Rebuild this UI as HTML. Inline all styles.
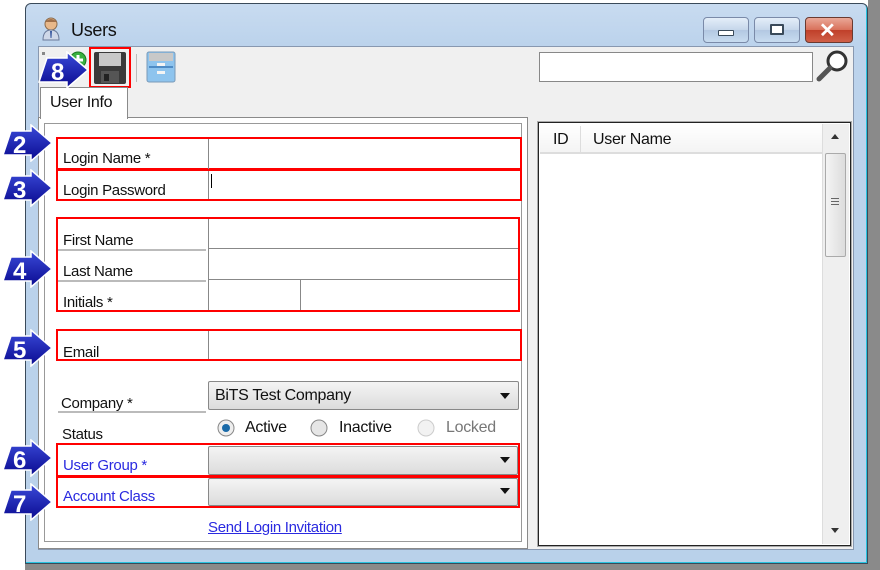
<!DOCTYPE html>
<html><head><meta charset="utf-8"><style>
*{margin:0;padding:0;box-sizing:border-box}
body{width:880px;height:570px;background:#fff;position:relative;overflow:hidden;font-family:"Liberation Sans",sans-serif;font-size:15px;color:#111}
.a{position:absolute}
.lbl{position:absolute;font-size:15px;letter-spacing:-0.3px}
.red{position:absolute;border:2px solid #f00}
.ul{position:absolute;height:2px;background:#bbb}
.cmb{position:absolute;border:1px solid #888;border-radius:2px;background:linear-gradient(#f4f4f4,#dcdcdc)}
.tri{position:absolute;width:0;height:0;border-left:5px solid transparent;border-right:5px solid transparent;border-top:6px solid #111}
</style></head><body>
<div class="a" style="left:868px;top:0;width:12px;height:570px;background:#8a8a8a"></div>
<div class="a" style="left:25px;top:564px;width:855px;height:6px;background:#8a8a8a"></div>
<div class="a" style="left:25px;top:3px;width:843px;height:561px;background:linear-gradient(#c8dbf0 0,#bcd3ec 40px,#b9d1ea 100%);border:1px solid #3a4a5a;border-radius:6px 6px 0 0;box-shadow:inset -1px -1px 0 #27c3e0"></div>
<svg class="a" style="left:40px;top:16px" width="22" height="26" viewBox="0 0 22 26"><circle cx="11" cy="8" r="6" fill="#e8b88a" stroke="#8a6a4a"/><path d="M5 6 Q11 0 17 6" fill="#a0704a"/><path d="M3 24 Q3 14 11 14 Q19 14 19 24Z" fill="#cfd8e8" stroke="#6a7a9a"/><path d="M10 15 L12 15 L11.5 22 L10.5 22Z" fill="#3a5aa0"/></svg>
<div class="lbl" style="left:71px;top:20px;font-size:18px">Users</div>
<div class="a" style="left:703px;top:17px;width:46px;height:26px;border:1px solid #7a8aa8;border-radius:4px;background:linear-gradient(#e4eef9,#c5d6ea 50%,#b3c8e2 51%,#c8dcf0)"></div>
<div class="a" style="left:718px;top:30px;width:16px;height:6px;border:1px solid #3a4a5a;background:#fff;border-radius:1px"></div>
<div class="a" style="left:754px;top:17px;width:46px;height:26px;border:1px solid #7a8aa8;border-radius:4px;background:linear-gradient(#e4eef9,#c5d6ea 50%,#b3c8e2 51%,#c8dcf0)"></div>
<div class="a" style="left:770px;top:24px;width:14px;height:11px;border:2px solid #3a4a5a;background:#fff;border-radius:1px"></div>
<div class="a" style="left:805px;top:17px;width:48px;height:26px;border:1px solid #6a3a30;border-radius:4px;background:linear-gradient(#eaa898,#d8705a 50%,#c0402a 51%,#d06048)"></div>
<div class="a" style="left:819px;top:18px;color:#fff;font-size:20px;font-weight:bold">✕</div>
<div class="a" style="left:38px;top:46px;width:816px;height:504px;background:#f0f0f0;border:1px solid #8898b0"></div>
<div class="a" style="left:42px;top:52px;width:3px;height:3px;background:#888"></div>
<svg class="a" style="left:68px;top:50px" width="20" height="20"><circle cx="10" cy="10" r="8" fill="#3ab040" stroke="#1a7a20"/><path d="M10 5v10M5 10h10" stroke="#fff" stroke-width="3"/></svg>
<svg class="a" style="left:93px;top:51px" width="34" height="34" viewBox="0 0 34 34"><rect x="1" y="1" width="32" height="32" rx="2" fill="#3a3a3a"/><rect x="6" y="2" width="22" height="13" fill="#c8c8c8"/><rect x="8" y="20" width="18" height="12" fill="#555"/><rect x="11" y="23" width="5" height="7" fill="#222"/></svg>
<div class="red" style="left:89px;top:47px;width:42px;height:41px"></div>
<div class="a" style="left:136px;top:54px;width:1px;height:28px;background:#bbb"></div>
<svg class="a" style="left:146px;top:51px" width="30" height="32"><rect x="1" y="1" width="28" height="30" rx="2" fill="#8ec4ee" stroke="#7a9ab8"/><rect x="3" y="2" width="24" height="8" fill="#c8c8c8"/><path d="M3 16h24" stroke="#3a7ab8" stroke-width="1.5"/><rect x="11" y="12" width="8" height="3" fill="#f4f4f4"/><rect x="11" y="20" width="8" height="3" fill="#f4f4f4"/></svg>
<div class="a" style="left:539px;top:52px;width:274px;height:30px;background:#fff;border:1px solid #888"></div>
<svg class="a" style="left:815px;top:48px" width="36" height="36"><circle cx="22" cy="13" r="9" fill="#fff" stroke="#333" stroke-width="3"/><path d="M15 20 L4 31" stroke="#555" stroke-width="5" stroke-linecap="round"/></svg>
<div class="a" style="left:38px;top:117px;width:490px;height:432px;border:1px solid #8a8a8a;background:#fff"></div>
<div class="a" style="left:40px;top:87px;width:88px;height:32px;background:#fff;border:1px solid #8a8a8a;border-bottom:none"></div>
<div class="lbl" style="left:50px;top:94px;font-size:16px">User Info</div>
<div class="a" style="left:44px;top:123px;width:478px;height:419px;border:1px solid #999"></div>
<div class="red" style="left:56px;top:137px;width:466px;height:33px"></div>
<div class="a" style="left:208px;top:139px;width:1px;height:60px;background:#888"></div>
<div class="lbl" style="left:63px;top:150px">Login Name *</div>
<div class="red" style="left:56px;top:169px;width:466px;height:32px"></div>
<div class="lbl" style="left:63px;top:182px">Login Password</div>
<div class="a" style="left:211px;top:174px;width:1px;height:14px;background:#000"></div>
<div class="red" style="left:56px;top:217px;width:464px;height:95px"></div>
<div class="a" style="left:208px;top:219px;width:1px;height:91px;background:#888"></div>
<div class="a" style="left:208px;top:248px;width:310px;height:1px;background:#888"></div>
<div class="a" style="left:208px;top:279px;width:310px;height:1px;background:#888"></div>
<div class="a" style="left:300px;top:279px;width:1px;height:31px;background:#888"></div>
<div class="ul" style="left:58px;top:249px;width:148px"></div>
<div class="ul" style="left:58px;top:280px;width:148px"></div>
<div class="lbl" style="left:63px;top:232px">First Name</div>
<div class="lbl" style="left:63px;top:263px">Last Name</div>
<div class="lbl" style="left:63px;top:294px">Initials *</div>
<div class="red" style="left:56px;top:329px;width:466px;height:32px"></div>
<div class="a" style="left:208px;top:331px;width:1px;height:28px;background:#888"></div>
<div class="lbl" style="left:63px;top:344px">Email</div>
<div class="ul" style="left:58px;top:411px;width:148px"></div>
<div class="lbl" style="left:61px;top:395px">Company *</div>
<div class="cmb" style="left:208px;top:381px;width:311px;height:29px"></div>
<div class="lbl" style="left:215px;top:387px;font-size:16px">BiTS Test Company</div>
<div class="tri" style="left:500px;top:393px"></div>
<div class="lbl" style="left:62px;top:426px">Status</div>
<svg class="a" style="left:216px;top:418px" width="20" height="20"><circle cx="10" cy="10" r="8" fill="#eee" stroke="#888"/><circle cx="10" cy="10" r="4" fill="#1a6aa8"/></svg>
<div class="lbl" style="left:245px;top:419px;font-size:16px">Active</div>
<svg class="a" style="left:309px;top:418px" width="20" height="20"><circle cx="10" cy="10" r="8" fill="#e6e6e6" stroke="#888"/></svg>
<div class="lbl" style="left:339px;top:419px;font-size:16px">Inactive</div>
<svg class="a" style="left:416px;top:418px" width="20" height="20"><circle cx="10" cy="10" r="8" fill="#f2f2f2" stroke="#ccc"/></svg>
<div class="lbl" style="left:446px;top:419px;font-size:16px;color:#777">Locked</div>
<div class="cmb" style="left:208px;top:446px;width:310px;height:29px"></div>
<div class="tri" style="left:500px;top:457px"></div>
<div class="cmb" style="left:208px;top:478px;width:310px;height:28px"></div>
<div class="tri" style="left:500px;top:488px"></div>
<div class="red" style="left:56px;top:443px;width:464px;height:34px"></div>
<div class="red" style="left:56px;top:476px;width:464px;height:32px"></div>
<div class="lbl" style="left:63px;top:457px;color:#2a2ae0">User Group *</div>
<div class="lbl" style="left:63px;top:488px;color:#2a2ae0">Account Class</div>
<div class="lbl" style="left:208px;top:519px;color:#2a2ae0;text-decoration:underline">Send Login Invitation</div>
<div class="a" style="left:538px;top:122px;width:313px;height:424px;background:#fff;border:1px solid #222;box-shadow:0 0 0 1px #aaa"></div>
<div class="a" style="left:540px;top:124px;width:282px;height:30px;background:linear-gradient(#fff,#f4f4f4);border-bottom:2px solid #ddd"></div>
<div class="a" style="left:580px;top:126px;width:1px;height:26px;background:#ddd"></div>
<div class="lbl" style="left:553px;top:131px;font-size:16px">ID</div>
<div class="lbl" style="left:593px;top:131px;font-size:16px">User Name</div>
<div class="a" style="left:822px;top:124px;width:27px;height:420px;background:#efefef;border-left:1px solid #ddd"></div>
<div class="a" style="left:825px;top:153px;width:21px;height:104px;border:1px solid #aaa;border-radius:2px;background:linear-gradient(90deg,#f4f4f4,#dcdcdc)"></div>
<div class="a" style="left:831px;top:198px;width:8px;height:7px;border-top:1px solid #666;border-bottom:1px solid #666"></div>
<div class="a" style="left:831px;top:201px;width:8px;height:1px;background:#666"></div>
<div class="a" style="left:831px;top:134px;border-left:4px solid transparent;border-right:4px solid transparent;border-bottom:5px solid #333"></div>
<div class="a" style="left:831px;top:528px;border-left:4px solid transparent;border-right:4px solid transparent;border-top:5px solid #333"></div>
<svg class="a" width="0" height="0"><defs><linearGradient id="g" x1="0" y1="0" x2="0" y2="1"><stop offset="0" stop-color="#3a4ad8"/><stop offset="1" stop-color="#0a0a90"/></linearGradient><path id="ar" d="M9 7 H29 V1 L50 19 L29 37 V31 H1 Z" fill="url(#g)" stroke="#fff" stroke-width="1.5"/></defs></svg>
<svg class="a" style="left:38px;top:51px" width="52" height="38"><use href="#ar"/><text x="13" y="29" fill="#fff" font-family="Liberation Sans" font-weight="bold" font-size="24">8</text></svg>
<svg class="a" style="left:2px;top:124px" width="52" height="38"><use href="#ar"/><text x="11" y="29" fill="#fff" font-family="Liberation Sans" font-weight="bold" font-size="24">2</text></svg>
<svg class="a" style="left:2px;top:169px" width="52" height="38"><use href="#ar"/><text x="11" y="29" fill="#fff" font-family="Liberation Sans" font-weight="bold" font-size="24">3</text></svg>
<svg class="a" style="left:2px;top:250px" width="52" height="38"><use href="#ar"/><text x="11" y="29" fill="#fff" font-family="Liberation Sans" font-weight="bold" font-size="24">4</text></svg>
<svg class="a" style="left:2px;top:329px" width="52" height="38"><use href="#ar"/><text x="11" y="29" fill="#fff" font-family="Liberation Sans" font-weight="bold" font-size="24">5</text></svg>
<svg class="a" style="left:2px;top:439px" width="52" height="38"><use href="#ar"/><text x="11" y="29" fill="#fff" font-family="Liberation Sans" font-weight="bold" font-size="24">6</text></svg>
<svg class="a" style="left:2px;top:483px" width="52" height="38"><use href="#ar"/><text x="11" y="29" fill="#fff" font-family="Liberation Sans" font-weight="bold" font-size="24">7</text></svg>
</body></html>
